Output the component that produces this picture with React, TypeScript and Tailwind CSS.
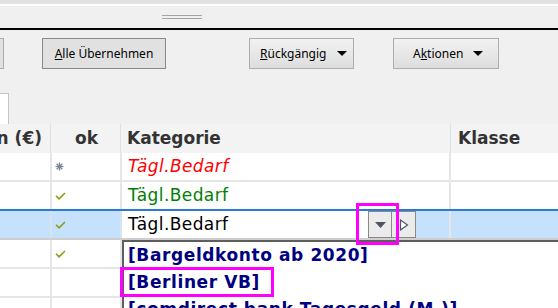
import type { ReactNode } from "react";

const GRID_LINE = "border-[#e6e6e6]";

function Check() {
  return (
    <svg width="11" height="8" viewBox="0 0 11 8" className="ml-[3px]">
      <path d="M1 3.8 L4 6.8 L10 1" fill="none" stroke="#8f9b12" strokeWidth="1.6" />
    </svg>
  );
}

function Star() {
  return (
    <svg width="9" height="9" viewBox="0 0 9 9" className="ml-[3px]">
      <g stroke="#7a8496" strokeWidth="1.3">
        <path d="M4.5 0.5 V8.5" />
        <path d="M0.5 4.5 H8.5" />
        <path d="M1.7 1.7 L7.3 7.3" />
        <path d="M7.3 1.7 L1.7 7.3" />
      </g>
    </svg>
  );
}

function Caret() {
  return (
    <svg width="10" height="5" viewBox="0 0 10 5">
      <path d="M0 0 H10 L5 5 Z" fill="#000" />
    </svg>
  );
}

function ToolButton({ children, className }: { children: ReactNode; className: string }) {
  return (
    <div className={`flex h-[31px] items-center border border-[#adadad] bg-gradient-to-b from-[#f2f2f2] to-[#dddddd] text-[12px] text-black ${className}`}>
      {children}
    </div>
  );
}

function Row({ ok, kat, className = "", line = GRID_LINE }: { ok?: ReactNode; kat?: ReactNode; className?: string; line?: string }) {
  return (
    <div className={`flex h-[29px] border-b-2 ${line} ${className}`}>
      <div className={`w-[52px] shrink-0 border-r-2 ${GRID_LINE}`} />
      <div className={`flex w-[70px] shrink-0 items-center border-r-2 ${GRID_LINE}`}>{ok}</div>
      <div className={`flex w-[329px] shrink-0 items-center border-r-2 ${GRID_LINE}`}>{kat}</div>
      <div className="flex-1" />
    </div>
  );
}

export default function App() {
  return (
    <div className="relative h-[308px] w-[558px] overflow-hidden bg-[#f0f0f0] font-['DejaVu_Sans',sans-serif]">
      {/* window chrome */}
      <div className="h-[4px] bg-[#e2e2e2]" />
      <div className="h-[2px] bg-white" />
      <div className="flex h-[22px] flex-col gap-[2px] pl-[162px] pt-[9px]">
        <div className="h-px w-[40px] bg-[#a3a3a3]" />
        <div className="h-px w-[40px] bg-[#a3a3a3]" />
      </div>
      <div className="h-[2px] bg-black" />

      {/* toolbar */}
      <div className="h-[94px] pt-[8px] font-['Noto_Sans',sans-serif]">
        <div className="flex">
          <div className="h-[31px] w-[4px] border-y border-r border-[#adadad] bg-[#e1e1e1]" />
          <div className="ml-[38px] flex h-[31px] w-[124px] items-center justify-center border border-[#8a8a8a] bg-[#e1e1e1] text-[12px] text-black">
            <span><span className="underline">A</span>lle Übernehmen</span>
          </div>
          <ToolButton className="ml-[83px] w-[105px] pl-[10px]">
            <span><span className="underline">R</span>ückgängig</span>
            <span className="ml-auto mr-[6px] flex"><Caret /></span>
          </ToolButton>
          <ToolButton className="ml-[39px] w-[106px] pl-[19px]">
            <span>A<span className="underline">k</span>tionen</span>
            <span className="ml-auto mr-[15px] flex"><Caret /></span>
          </ToolButton>
        </div>
        <div className="mt-[24px] h-[31px] w-[9px] border-t border-r border-[#c4c4c4] bg-white" />
      </div>

      {/* grid header */}
      <div className="flex h-[29px] bg-[#f3f3f3] text-[17px] font-bold text-[#333]">
        <div className="flex w-[51px] shrink-0 items-center justify-end overflow-hidden whitespace-nowrap border-r border-[#d9e1e9] pr-[8px]">Betrag in (€)</div>
        <div className="flex w-[70px] shrink-0 items-center justify-center border-r border-[#d9e1e9] pl-[2px]">ok</div>
        <div className="flex w-[330px] shrink-0 items-center border-r border-[#d9e1e9] pl-[6px]">Kategorie</div>
        <div className="flex flex-1 items-center pl-[7px]">Klasse</div>
      </div>

      {/* grid rows */}
      <div className="bg-white text-[17px] tracking-[0.4px]">
        <Row ok={<Star />} kat={<span className="pl-[6px] italic text-[#ff0000]">Tägl.Bedarf</span>} />
        <Row ok={<Check />} kat={<span className="pl-[6px] text-[#008000]">Tägl.Bedarf</span>} line="border-[#2b7ad6]" />
        <div className="flex h-[29px] border-b-2 border-[#cfcfcf] bg-[#c6e1fb]">
          <div className="w-[52px] shrink-0 border-r-2 border-[#d6e4f2]" />
          <div className="flex w-[70px] shrink-0 items-center border-r-2 border-[#d6e4f2]"><Check /></div>
          <div className="flex w-[329px] shrink-0 border-r-2 border-[#e6e6e6]">
            <div className="flex w-[246px] items-center bg-white pl-[6px] text-black">Tägl.Bedarf</div>
            <div className="flex w-[24px] items-center justify-center border border-[#8a8a8a] bg-[#ececec]">
              <svg width="11" height="6" viewBox="0 0 11 6"><path d="M0 0 H11 L5.5 6 Z" fill="#4d5866" /></svg>
            </div>
            <div className="flex w-[24px] items-center justify-center border border-l-0 border-[#8a8a8a] bg-[#ececec]">
              <svg width="10" height="12" viewBox="0 0 10 12"><path d="M1.5 1 L8.5 6 L1.5 11 Z" fill="white" stroke="#4d5866" strokeWidth="1.2" /></svg>
            </div>
          </div>
          <div className="flex-1" />
        </div>
        <Row ok={<Check />} />
        <Row />
        <Row />
      </div>

      {/* open dropdown list */}
      <div className="absolute left-[122px] top-[240px] w-[460px] border-l-2 border-t-2 border-[#5e5e5e] bg-white pl-[4px] text-[17px] font-bold tracking-[0.6px] text-[#000080]">
        <div className="flex h-[27px] items-center">[Bargeldkonto ab 2020]</div>
        <div className="flex h-[27px] items-center">[Berliner VB]</div>
        <div className="flex h-[27px] items-center">[comdirect bank Tagesgeld (M.)]</div>
      </div>

      {/* highlight boxes */}
      <div className="absolute left-[356px] top-[203px] h-[42px] w-[43px] border-[3px] border-[#ff00ff]" />
      <div className="absolute left-[120px] top-[267px] h-[30px] w-[154px] border-[3px] border-[#ff00ff]" />
    </div>
  );
}
